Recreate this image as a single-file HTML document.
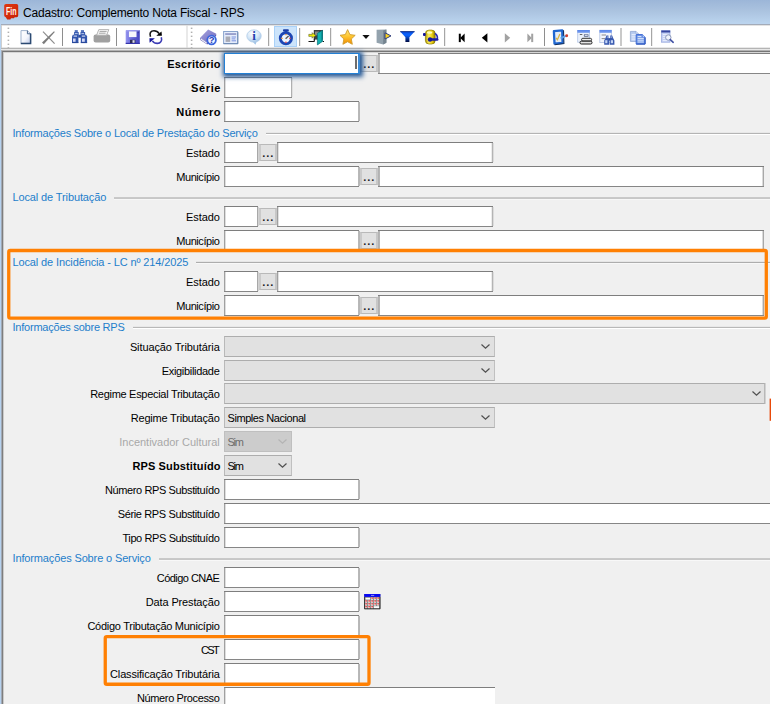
<!DOCTYPE html>
<html lang="pt-BR"><head><meta charset="utf-8"><title>Cadastro: Complemento Nota Fiscal - RPS</title>
<style>
html,body{margin:0;padding:0}
body{width:771px;height:704px;overflow:hidden;position:relative;background:#f0f0f0;font:11px "Liberation Sans", sans-serif;color:#000}
#win{position:absolute;left:0;top:0;width:771px;height:704px;overflow:hidden;background:#f0f0f0}
#title{position:absolute;left:0;top:0;width:771px;height:24px;background:linear-gradient(#9cb6d8 0,#a9c1de 40%,#bcd5ef 100%)}
#tln{position:absolute;left:1px;top:24px;width:770px;height:1px;background:#a3abb9}
#tll{position:absolute;left:1px;top:25px;width:1px;height:23px;background:#cfcfcf}
#title .t{position:absolute;left:23px;top:6px;font:12px "Liberation Sans", sans-serif;line-height:14px;color:#000;white-space:nowrap;letter-spacing:-0.19px}
#tb{position:absolute;left:1px;top:25px;width:770px;height:23px;background:#fff}
#edgeL0{position:absolute;left:0;top:24px;width:1px;height:680px;background:#b6d2ef}
#edgeL1{position:absolute;left:1px;top:50px;width:1px;height:654px;background:#a2aab6}
#edgeL2{position:absolute;left:2px;top:51px;width:1px;height:653px;background:#7e7e7e}
#edgeL3{position:absolute;left:3px;top:52px;width:1px;height:652px;background:#cbcbcb}
#edgeR{position:absolute;left:770px;top:0;width:1px;height:704px;background:#fff;z-index:4}
#ln25{position:absolute;left:2px;top:25px;width:768px;height:1px;background:#e3e3e3}
#ln47{position:absolute;left:2px;top:47px;width:768px;height:1px;background:#e8e8e8}
#ln48{position:absolute;left:1px;top:48px;width:769px;height:1px;background:#b4b4b4}
#ln49{position:absolute;left:1px;top:49px;width:769px;height:1px;background:#e8e8e8}
#ln50{position:absolute;left:1px;top:50px;width:769px;height:1px;background:#b2b2b2}
#ln51{position:absolute;left:2px;top:51px;width:768px;height:1px;background:#767676}
#ln52{position:absolute;left:3px;top:52px;width:767px;height:1px;background:#d6d6d6}
.lb{position:absolute;left:0;height:21px;line-height:21px;text-align:right;white-space:nowrap;color:#000}
.lb.b{font-weight:bold}
.lb.dis{color:#a8a8a8}
.in{position:absolute;height:21px;box-sizing:border-box;background:#fff;border-top:1px solid #7e7e7e;border-bottom:1px solid #868686}
.in>i{position:absolute;top:0;width:1px;height:19px}
.in.focus{width:136px !important;border:1px solid #2380d4;border-right:2px solid #3a8ad6;box-shadow:.5px .5px 4.5px 2px rgba(40,90,150,1);z-index:2}
.in .caret{position:absolute;left:130px;top:2px;width:2px;height:13px;background:#6e6e6e}
.bt{position:absolute;width:18px;height:17px;box-sizing:border-box;background:#e1e1e1;border:1px solid #b9b9b9;border-left:2px solid #cacaca;border-right:2px solid #c7c7c7;overflow:hidden}
.bt span{position:absolute;left:1.2px;top:0.6px;white-space:nowrap;line-height:15px;font-size:11px;font-weight:bold;letter-spacing:0.94px;color:#222}
.gh{position:absolute;left:12.5px;height:16px;line-height:16px;color:#1e7ecb;white-space:nowrap}
.gl{position:absolute;right:1px;height:1px}
.cb{position:absolute;height:21px;box-sizing:border-box;background:#e1e1e1;border:1px solid #adadad;border-left-color:#b9b9b9;border-right-color:#c0c0c0;line-height:19px;white-space:nowrap;overflow:hidden}
.cb span{position:absolute;left:2.5px;top:1px;color:#000;letter-spacing:-0.43px}
.cb .chev{position:absolute;right:2.6px;top:6.3px}
.cb.wide{box-shadow:1px 0 0 #d2d2d2;border-right-color:#b8b8b8}
.cb.wide .chev{right:2px}
.cb.dis{background:#cccccc;border-color:#bfbfbf}
.cb.dis span{color:#6d6d6d}
.hl{position:absolute;border:3px solid #ff7f0e;border-radius:2px;z-index:5}
.omark{position:absolute;left:769px;top:399px;width:2px;height:22px;background:#e8500a;z-index:5}
.ic{position:absolute}
</style></head>
<body><div id="win">
<div id="title"><svg class="ic" style="left:3px;top:3px" width="17" height="18" viewBox="3 3 17 18">
<defs><linearGradient id="glogo" x1="0" y1="0" x2="1" y2="1"><stop offset="0" stop-color="#e0380e"/><stop offset=".5" stop-color="#d42c0c"/><stop offset="1" stop-color="#c41c04"/></linearGradient></defs>
<path d="M6 4 H16.6 Q18.2 4 18.2 5.6 V15.6 Q18.2 17.2 16.6 17.2 H14.6 L14 18.2 H11 L10.4 19.4 H7.2 L5.8 17.2 Q4.2 17 4.2 15.6 V5.6 Q4.2 4 6 4 Z" fill="url(#glogo)"/>
<text x="5.9" y="15.1" font-family="Liberation Sans, sans-serif" font-size="11" font-weight="bold" fill="#fff3ee" textLength="10.6" lengthAdjust="spacingAndGlyphs">Fin</text>
</svg>
<span class="t">Cadastro: Complemento Nota Fiscal - RPS</span></div>
<div id="tb"></div><div id="tln"></div><div id="tll"></div>
<svg id="tbsvg" style="position:absolute;left:0;top:0;z-index:3" width="771" height="52" viewBox="0 0 771 52">
<defs>
<linearGradient id="gdoc" x1="0" y1="0" x2="1" y2="1"><stop offset="0" stop-color="#ffffff"/><stop offset=".55" stop-color="#f4f6fc"/><stop offset="1" stop-color="#bcc8e6"/></linearGradient>
<linearGradient id="gsave" x1="0" y1="0" x2="1" y2="0"><stop offset="0" stop-color="#9696f0"/><stop offset=".45" stop-color="#6464d6"/><stop offset="1" stop-color="#4444c0"/></linearGradient>
<linearGradient id="gstar" x1="0" y1="0" x2="0" y2="1"><stop offset="0" stop-color="#ffe680"/><stop offset=".45" stop-color="#ffc832"/><stop offset="1" stop-color="#f08a00"/></linearGradient>
<linearGradient id="gfun" x1="0" y1="0" x2="0" y2="1"><stop offset="0" stop-color="#0a50e0"/><stop offset=".35" stop-color="#0a64ff"/><stop offset="1" stop-color="#000a40"/></linearGradient>
<linearGradient id="gbook" x1="0" y1="0" x2="1" y2="1"><stop offset="0" stop-color="#a8a4e0"/><stop offset="1" stop-color="#6c68bc"/></linearGradient>
<radialGradient id="gbub" cx=".4" cy=".3" r=".8"><stop offset="0" stop-color="#ffffff"/><stop offset=".55" stop-color="#d2e5f6"/><stop offset="1" stop-color="#8fb8e2"/></radialGradient>
<linearGradient id="gdb" x1="0" y1="0" x2="1" y2="0"><stop offset="0" stop-color="#b09a00"/><stop offset=".35" stop-color="#fff060"/><stop offset=".7" stop-color="#e8cc10"/><stop offset="1" stop-color="#8a7800"/></linearGradient>
<linearGradient id="gwin" x1="0" y1="0" x2="0" y2="1"><stop offset="0" stop-color="#4a7ae8"/><stop offset="1" stop-color="#86a8f0"/></linearGradient>
</defs>
<!-- grips -->
<g fill="#b0b0b0"><rect x="7.6" y="27.6" width="1.6" height="1.4"/><rect x="7.6" y="31.6" width="1.6" height="1.4"/><rect x="7.6" y="35.6" width="1.6" height="1.4"/><rect x="7.6" y="39.6" width="1.6" height="1.4"/><rect x="7.6" y="43.6" width="1.6" height="1.4"/><rect x="7.6" y="47.2" width="1.6" height="1"/>
<rect x="190.8" y="27.6" width="1.6" height="1.4"/><rect x="190.8" y="31.6" width="1.6" height="1.4"/><rect x="190.8" y="35.6" width="1.6" height="1.4"/><rect x="190.8" y="39.6" width="1.6" height="1.4"/><rect x="190.8" y="43.6" width="1.6" height="1.4"/><rect x="190.8" y="47.2" width="1.6" height="1"/></g>
<rect x="186.5" y="25.5" width="1" height="22.5" fill="#d4d4d4"/>
<!-- separators -->
<g fill="#8e8e8e"><rect x="62" y="28" width="1" height="18"/><rect x="116" y="28" width="1" height="18"/><rect x="544" y="28" width="1" height="18"/></g>
<g fill="#a6a6a6"><rect x="268" y="28" width="1.2" height="18"/><rect x="299" y="28" width="1.2" height="18"/><rect x="330" y="28" width="1.2" height="18"/><rect x="444" y="28" width="1.2" height="18"/><rect x="620.4" y="28" width="1.2" height="18"/><rect x="651" y="28" width="1.2" height="18"/></g>
<!-- new doc -->
<path d="M21 30.6 H27.6 L30.6 33.6 V43.4 H21 Z" fill="url(#gdoc)" stroke="#9fb2cc" stroke-width="1"/>
<path d="M27.4 30.6 V33.8 H30.6" fill="#dfe6f4" stroke="#4a688e" stroke-width="1"/>
<path d="M30.6 33.4 V43.5 H20.8" fill="none" stroke="#2c4a72" stroke-width="1.5"/>
<!-- delete X -->
<path d="M43 31.6 L54.6 43.6" stroke="#8c8c8c" stroke-width="1.2" fill="none"/>
<path d="M42 42.4 L43.8 44.2 L54.8 32 L54 31.2 Z" fill="#7c7c7c"/>
<!-- binoculars -->
<g>
<rect x="74.7" y="30.1" width="3.1" height="2.2" fill="#5474be"/><rect x="80.9" y="30.1" width="3.1" height="2.2" fill="#5474be"/>
<rect x="74.1" y="32" width="4.6" height="3" fill="#3a5cb0"/><rect x="80.5" y="32" width="4.6" height="3" fill="#3a5cb0"/>
<path d="M72.9 34.8 H78.4 V43 H72 V36.6 Z" fill="#3255ac"/><path d="M80.8 34.8 H86.2 L87.1 36.6 V43 H80.8 Z" fill="#3255ac"/>
<rect x="78.2" y="34.8" width="2.8" height="2.9" fill="#2c4ca2"/>
<rect x="75" y="33.2" width="2.7" height=".9" fill="#c6d4f2"/><rect x="81.4" y="33.2" width="2.7" height=".9" fill="#c6d4f2"/>
<rect x="73.6" y="35.6" width="3.4" height="1" fill="#e6ecfc"/><rect x="81.8" y="35.6" width="3.4" height="1" fill="#e6ecfc"/>
<rect x="73" y="38.5" width="2.6" height="3.3" fill="#d4d8f6"/><rect x="82" y="38.5" width="2.8" height="3.3" fill="#d4d8f6"/>
<rect x="72" y="42.2" width="6.4" height=".9" fill="#284696"/><rect x="80.8" y="42.2" width="6.3" height=".9" fill="#284696"/>
</g>
<!-- printer (disabled) -->
<g>
<path d="M95.6 34.4 h12.6 q2 0 2 2 v4.2 q0 2 -2 2 h-12.6 q-2 0 -2 -2 v-4.2 q0 -2 2 -2z" fill="#a0a0a0"/>
<path d="M98.8 29.6 H108.8 L106.6 35.2 H96.6 Z" fill="#fafafa" stroke="#acacac" stroke-width=".9"/>
<path d="M99.6 31.4 H106.6 M98.9 33.2 H105.6" stroke="#9a9a9a" stroke-width=".9"/>
</g>
<!-- save -->
<g>
<rect x="125.7" y="30.1" width="14.1" height="13.9" rx=".8" fill="url(#gsave)"/>
<rect x="126.2" y="30.1" width="13" height="1.3" fill="#a8a8f2" opacity=".85"/>
<rect x="125.7" y="42.8" width="14.1" height="1.2" fill="#3434aa"/>
<rect x="128.9" y="31.4" width="7.6" height="5.7" fill="#f6f6fc"/>
<rect x="137.6" y="31.6" width="1.4" height="1.6" fill="#3a3aa0"/>
<rect x="130" y="39.8" width="5.4" height="3.2" fill="#2c2c54"/>
<rect x="132.5" y="40.2" width="2.1" height="2.6" fill="#dcdcea"/>
</g>
<!-- refresh -->
<g fill="none" stroke-width="1.6">
<path d="M150.5 36.7 C149.2 33.4 150.6 30.7 154 30.7 C156.4 30.7 158 31.8 159.2 33.6" stroke="#141414"/>
<path d="M161.3 37.2 C162.3 40.6 160.6 43.4 157.4 43.4 C155 43.4 153.4 42.4 152.4 40.8" stroke="#3a3ab4"/>
</g>
<path d="M161.5 31.5 L161.9 35.8 L156.3 35.8 Z" fill="#000"/>
<path d="M149.4 38.3 L154.9 38.3 L149.6 42.8 Z" fill="#14149a"/>
<!-- help book -->
<g>
<path d="M208.2 29.4 L216.2 33.8 L207.4 42.4 L200.2 37.8 Z" fill="url(#gbook)"/>
<path d="M216.2 33.8 V35.8 L207.2 44.4 L200.4 40 L200.2 37.8 L207.4 42.4 Z" fill="#5d59ae"/>
<path d="M200.8 39 L206.8 43.2" stroke="#f0f0fa" stroke-width="1.1"/>
<circle cx="211.6" cy="40" r="4.3" fill="#eef3ff" stroke="#3c66de" stroke-width="1.8"/>
<text x="211.7" y="43.2" font-family="Liberation Sans, sans-serif" font-size="9.5" font-weight="bold" fill="#2c3cb2" text-anchor="middle">?</text>
</g>
<!-- form icon -->
<g>
<rect x="223.6" y="31.5" width="14" height="12" fill="#e4ecfb" stroke="#8aa4cd" stroke-width="1"/>
<path d="M223.6 43.8 H237.9 V32.2" fill="none" stroke="#6482ac" stroke-width=".9"/>
<rect x="225.2" y="33.1" width="11" height="1.9" fill="#98a0cc"/>
<rect x="225.6" y="36.5" width="4.6" height="5.4" fill="#a9abb5"/>
<path d="M231.6 37 H236 M231.6 38.9 H235.4 M231.6 40.8 H236" stroke="#7a92de" stroke-width="1"/>
</g>
<!-- info bubble -->
<g>
<path d="M251.8 40.4 L257 40.6 L255.4 44.8 Z" fill="#9cc0e6"/>
<ellipse cx="254" cy="36" rx="7.2" ry="6.2" fill="url(#gbub)" stroke="#b4cee8" stroke-width=".8"/>
<text x="254.1" y="40.2" font-family="Liberation Serif, serif" font-size="13" font-weight="bold" fill="#2442ae" text-anchor="middle">i</text>
</g>
<!-- clock (pressed) -->
<rect x="274.5" y="26.5" width="22" height="20" fill="#cce4fb" stroke="#a9d1f8" stroke-width="1"/>
<g>
<rect x="283" y="29.3" width="5.8" height="2.2" rx=".8" fill="#1b3ea6"/>
<rect x="284.6" y="30.6" width="2.6" height="2" fill="#1b3ea6"/>
<circle cx="285.9" cy="38.3" r="5.6" fill="#eef6ff" stroke="#1c46b4" stroke-width="2.9"/>
<rect x="285.3" y="33.9" width="1.3" height="1.4" fill="#f09a3a"/>
<rect x="289.2" y="37.7" width="1.5" height="1.3" fill="#ea4a4a"/>
<rect x="285.2" y="41.6" width="1.4" height="1.4" fill="#ea4a4a"/>
<rect x="281.2" y="37.7" width="1.5" height="1.3" fill="#f09a3a"/>
<path d="M285.6 38.8 L288.6 36" stroke="#5c5c5c" stroke-width="1.4"/>
</g>
<!-- exit door -->
<g>
<path d="M313.8 30 H323 V39.6 H313.8 Z" fill="#3e3e3e"/>
<path d="M315 31.4 H319 V34.2 L315 36 Z" fill="#8c8c8c"/>
<path d="M314.3 38.8 V41.6" stroke="#111" stroke-width="1.1"/>
<path d="M308.5 41.5 H314.4 M322.6 41.5 H324" stroke="#111" stroke-width="1.1"/>
<path d="M317.4 33.2 L322.4 30.4 V41.4 L317.4 44.9 Z" fill="#12b0b0" stroke="#0a7078" stroke-width=".7" stroke-linejoin="round"/>
<path d="M321.2 31.4 L322.4 30.6 V41.2 L321.2 42 Z" fill="#0c8c92"/>
<path d="M308.8 34.3 L312.3 34.5 L311.9 32.7 L316 35.4 L311.9 38.1 L312.3 36.3 L308.8 36.4 Z" fill="#f2f200" stroke="#55552a" stroke-width=".55" stroke-linejoin="round"/>
</g>
<!-- star -->
<path d="M347.6 29.6 L349.9 34.6 L355.2 35.3 L351.3 39 L352.3 44.3 L347.6 41.7 L342.9 44.3 L343.9 39 L340 35.3 L345.3 34.6 Z" fill="url(#gstar)" stroke="#cf9c2c" stroke-width=".9" stroke-linejoin="round"/>
<path d="M362.4 35 H369.6 L366 39.1 Z" fill="#111"/>
<!-- door w/ arrow -->
<g>
<path d="M376.6 29.7 L386.4 29.4 V42.8 L383.2 44.4 L376.6 42.8 Z" fill="#93a2ad"/>
<path d="M383.2 30.6 L386.4 29.4 V42.8 L383.2 44.4 Z" fill="#75848f"/>
<path d="M385 32.8 L391 35.9 L385 39 Z" fill="#f9d21e" stroke="#2c3c84" stroke-width="1" stroke-linejoin="round"/>
</g>
<!-- funnel -->
<path d="M400.2 31.4 H414.6 L409.4 37.2 V42 H405.4 V37.2 Z" fill="url(#gfun)"/>
<rect x="400.2" y="31.2" width="14.4" height="1" fill="#0a2c86"/>
<!-- yellow db with blue arrow -->
<g>
<rect x="425.4" y="30.1" width="9.8" height="13.9" rx="3.6" fill="url(#gdb)" stroke="#8a7800" stroke-width=".7"/>
<ellipse cx="429.6" cy="32.6" rx="2.8" ry="1.2" fill="#fffbc0"/>
<rect x="423" y="33" width="2.7" height="2.9" rx="1" fill="#14149c"/>
<path d="M435 33.4 Q438.4 36 437 39.6" fill="none" stroke="#2c2cb4" stroke-width="1.6"/>
<path d="M430 39.5 H437.2" stroke="#1a1aa6" stroke-width="2.6" stroke-linecap="round"/>
<circle cx="430" cy="39.5" r="2.2" fill="#14149c"/>
</g>
<!-- nav -->
<rect x="458.8" y="33.7" width="2" height="8.4" fill="#000"/>
<path d="M460.2 37.9 L464.6 33.5 V42.3 Z" fill="#000"/>
<path d="M481.8 37.8 L487.4 33.2 V42.4 Z" fill="#000"/>
<path d="M510.2 37.8 L504.8 33.2 V42.4 Z" fill="#a2a2a2"/>
<path d="M531.8 37.9 L527.4 33.5 V42.3 Z" fill="#a2a2a2"/>
<rect x="531.2" y="33.7" width="2" height="8.4" fill="#a2a2a2"/>
<!-- icon A: doc check pen -->
<g>
<path d="M553.9 31.2 L562.2 30.4 L562.6 42.8 L554.5 43.6 Z" fill="#e4ecf6" stroke="#1f66d0" stroke-width="2.3" stroke-linejoin="round"/>
<path d="M563.5 30.2 L563.9 43.6 L554.6 44.7" fill="none" stroke="#12305e" stroke-width="1.1"/>
<path d="M556 37.8 L557.4 39.7 L559.9 34" fill="none" stroke="#d9b548" stroke-width="1.3"/>
<path d="M560.6 38.4 L565.8 35.8" stroke="#58a0e8" stroke-width="1.9"/>
<circle cx="566.7" cy="35.7" r="1.45" fill="#d2402c"/>
</g>
<!-- icon B: window + printer -->
<g>
<rect x="577.7" y="30.4" width="11.8" height="11.8" fill="#eaf0fa" stroke="#b4c6e6" stroke-width=".8"/>
<rect x="577.3" y="30.1" width="12.5" height="2.8" fill="url(#gwin)"/>
<rect x="579.8" y="34.1" width="2.5" height=".9" fill="#555"/>
<rect x="583.8" y="34.1" width="4.8" height="2.8" rx="1" fill="#7a86a4"/>
<rect x="585" y="34.8" width="2.6" height="1" fill="#e8ecf4"/>
<rect x="581.6" y="38.3" width="10" height="2.7" rx="1.2" fill="#eeeeee" stroke="#1c1c1c" stroke-width=".9"/>
<rect x="580" y="41.2" width="12" height="2.8" rx="1.3" fill="#e4e4e4" stroke="#1c1c1c" stroke-width="1"/>
</g>
<!-- icon C: window + binoculars -->
<g>
<rect x="599.8" y="30.2" width="11.6" height="12.4" fill="#f2f5fc" stroke="#b4c4e4" stroke-width=".8"/>
<rect x="599.5" y="30.1" width="12.2" height="2.8" fill="url(#gwin)"/>
<path d="M601.6 35 H606 M601.6 38.6 H605" stroke="#808080" stroke-width=".9"/>
<path d="M606.4 35.6 h2 v2 l.6 1 v6.2 h-4.8 v-4.4 l1.4 -2.6z M610.2 35.6 h2 l.8 2.2 l1.4 2.6 v4.4 h-4.8 v-6.2 l.6 -1z" fill="#3a5ab0"/>
<rect x="608.8" y="38.2" width="1.4" height="2.4" fill="#2c4ca2"/>
<rect x="605.2" y="40.2" width="2.2" height="3" fill="#c4d4f4"/><rect x="610.8" y="40.2" width="2.2" height="3" fill="#c4d4f4"/><rect x="606.8" y="36.6" width="1.4" height=".9" fill="#c4d4f4"/><rect x="610.6" y="36.6" width="1.4" height=".9" fill="#c4d4f4"/>
</g>
<!-- copy -->
<g>
<path d="M630.4 31.4 H636 L638.4 33.8 V41.4 H630.4 Z" fill="#b4c9ef" stroke="#8fa6d2" stroke-width=".8"/>
<path d="M636 31.4 V33.8 H638.4" fill="#e6eefc" stroke="#8fa6d2" stroke-width=".6"/>
<path d="M631.6 34.4 H637 M631.6 36.2 H637 M631.6 38 H637 M631.6 39.8 H637" stroke="#eef4ff" stroke-width=".9"/>
<path d="M636.2 34.6 H642.4 L645 37.2 V44 H636.2 Z" fill="#6f96e6" stroke="#3f6cd6" stroke-width="1"/>
<path d="M642.4 34.6 V37.2 H645" fill="#cfe0fb" stroke="#3f6cd6" stroke-width=".6"/>
<path d="M637.6 36.6 H641.4 M637.6 38.4 H643.8 M637.6 40.2 H643.8 M637.6 42 H643.8" stroke="#e8f0ff" stroke-width=".9"/>
<path d="M645.1 37.4 V44.1 H636.2" fill="none" stroke="#2f58bc" stroke-width="1"/>
</g>
<!-- search doc -->
<g>
<rect x="661.5" y="30.7" width="8.5" height="11.5" fill="#c3d0f4" stroke="#93a4dc" stroke-width=".7"/>
<rect x="661.3" y="30.5" width="8.9" height="2" fill="#3646a0"/>
<path d="M662.8 34.6 H668.8 M662.8 36.6 H665.6 M662.8 38.6 H665.6 M662.8 40.6 H667.4" stroke="#edf2fe" stroke-width=".9"/>
<circle cx="668.3" cy="37.5" r="2.7" fill="#f0f5fe" stroke="#8c98b8" stroke-width="1"/>
<path d="M670.3 39.6 L673.2 42.3" stroke="#4252a4" stroke-width="1.6" stroke-linecap="round"/>
</g>
</svg>

<div id="edgeL0"></div><div id="edgeL1"></div>
<div id="ln25"></div><div id="ln47"></div><div id="ln48"></div><div id="ln49"></div><div id="ln50"></div><div id="ln51"></div><div id="ln52"></div>
<div id="edgeL2"></div><div id="edgeL3"></div><div id="edgeR"></div>
<div class="lb b" style="top:54px;width:220.72px;letter-spacing:0.216px">Escritório</div>
<div class="in focus" style="left:224px;top:53px;width:135px"><i class="caret"></i></div>
<div class="bt" style="left:360px;top:55px"><span>...</span></div>
<div class="in" style="left:378px;top:53px;width:400px"><i style="left:0px;background:#b2b2b2"></i><i style="left:1px;background:#b6b6b6"></i></div>
<div class="lb b" style="top:78px;width:221.12px;letter-spacing:0.62px">Série</div>
<div class="in" style="left:224px;top:77px;width:68px"><i style="left:0px;background:#a0a0a0"></i><i style="left:1px;background:#dedede"></i><i style="left:67px;background:#b0b0b0"></i><i style="left:68px;background:#e0e0e0"></i></div>
<div class="lb b" style="top:102px;width:221.05px;letter-spacing:0.548px">Número</div>
<div class="in" style="left:224px;top:101px;width:135px"><i style="left:0px;background:#a0a0a0"></i><i style="left:1px;background:#dedede"></i><i style="left:134px;background:#b8b8b8"></i><i style="left:135px;background:#b6b6b6"></i></div>
<div class="gh" style="top:125px;letter-spacing:-0.189px"><span>Informações Sobre o Local de Prestação do Serviço</span></div><div class="gl" style="top:132px;left:266px;background:#e8e8e8"></div><div class="gl" style="top:133px;left:266px;background:#b4b4b4"></div><div class="gl" style="top:134px;left:266px;background:#ffffff"></div>
<div class="lb" style="top:143px;width:219.69px;letter-spacing:-0.11px">Estado</div>
<div class="in" style="left:224px;top:142px;width:34px"><i style="left:0px;background:#a0a0a0"></i><i style="left:1px;background:#dedede"></i><i style="left:33px;background:#a8a8a8"></i><i style="left:34px;background:#d2d2d2"></i></div>
<div class="bt" style="left:259px;top:144px"><span>...</span></div>
<div class="in" style="left:277px;top:142px;width:216px"><i style="left:0px;background:#a0a0a0"></i><i style="left:1px;background:#e2e2e2"></i><i style="left:214px;background:#ececec"></i><i style="left:215px;background:#b4b4b4"></i><i style="left:216px;background:#dcdcdc"></i></div>
<div class="lb" style="top:167px;width:219.35px;letter-spacing:-0.447px">Município</div>
<div class="in" style="left:224px;top:166px;width:135px"><i style="left:0px;background:#a0a0a0"></i><i style="left:1px;background:#dedede"></i><i style="left:134px;background:#b8b8b8"></i><i style="left:135px;background:#b6b6b6"></i></div>
<div class="bt" style="left:360px;top:168px"><span>...</span></div>
<div class="in" style="left:378px;top:166px;width:386px"><i style="left:0px;background:#b2b2b2"></i><i style="left:1px;background:#b6b6b6"></i><i style="left:384px;background:#dadada"></i><i style="left:385px;background:#a8a8a8"></i></div>
<div class="gh" style="top:189px;letter-spacing:-0.123px"><span>Local de Tributação</span></div><div class="gl" style="top:197px;left:114px;background:#c9c9c9"></div><div class="gl" style="top:198px;left:114px;background:#c7c7c7"></div><div class="gl" style="top:199px;left:114px;background:#f7f7f7"></div>
<div class="lb" style="top:207px;width:219.69px;letter-spacing:-0.11px">Estado</div>
<div class="in" style="left:224px;top:206px;width:34px"><i style="left:0px;background:#a0a0a0"></i><i style="left:1px;background:#dedede"></i><i style="left:33px;background:#a8a8a8"></i><i style="left:34px;background:#d2d2d2"></i></div>
<div class="bt" style="left:259px;top:208px"><span>...</span></div>
<div class="in" style="left:277px;top:206px;width:216px"><i style="left:0px;background:#a0a0a0"></i><i style="left:1px;background:#e2e2e2"></i><i style="left:214px;background:#ececec"></i><i style="left:215px;background:#b4b4b4"></i><i style="left:216px;background:#dcdcdc"></i></div>
<div class="lb" style="top:231px;width:219.35px;letter-spacing:-0.447px">Município</div>
<div class="in" style="left:224px;top:230px;width:135px"><i style="left:0px;background:#a0a0a0"></i><i style="left:1px;background:#dedede"></i><i style="left:134px;background:#b8b8b8"></i><i style="left:135px;background:#b6b6b6"></i></div>
<div class="bt" style="left:360px;top:232px"><span>...</span></div>
<div class="in" style="left:378px;top:230px;width:386px"><i style="left:0px;background:#b2b2b2"></i><i style="left:1px;background:#b6b6b6"></i><i style="left:384px;background:#dadada"></i><i style="left:385px;background:#a8a8a8"></i></div>
<div class="gh" style="top:254px;letter-spacing:-0.122px"><span>Local de Incidência - LC nº 214/2025</span></div><div class="gl" style="top:261px;left:196px;background:#e6e6e6"></div><div class="gl" style="top:262px;left:196px;background:#adadad"></div><div class="gl" style="top:263px;left:196px;background:#f8f8f8"></div>
<div class="lb" style="top:272px;width:219.69px;letter-spacing:-0.11px">Estado</div>
<div class="in" style="left:224px;top:271px;width:34px"><i style="left:0px;background:#a0a0a0"></i><i style="left:1px;background:#dedede"></i><i style="left:33px;background:#a8a8a8"></i><i style="left:34px;background:#d2d2d2"></i></div>
<div class="bt" style="left:259px;top:273px"><span>...</span></div>
<div class="in" style="left:277px;top:271px;width:216px"><i style="left:0px;background:#a0a0a0"></i><i style="left:1px;background:#e2e2e2"></i><i style="left:214px;background:#ececec"></i><i style="left:215px;background:#b4b4b4"></i><i style="left:216px;background:#dcdcdc"></i></div>
<div class="lb" style="top:296px;width:219.35px;letter-spacing:-0.447px">Município</div>
<div class="in" style="left:224px;top:295px;width:135px"><i style="left:0px;background:#a0a0a0"></i><i style="left:1px;background:#dedede"></i><i style="left:134px;background:#b8b8b8"></i><i style="left:135px;background:#b6b6b6"></i></div>
<div class="bt" style="left:360px;top:297px"><span>...</span></div>
<div class="in" style="left:378px;top:295px;width:386px"><i style="left:0px;background:#b2b2b2"></i><i style="left:1px;background:#b6b6b6"></i><i style="left:384px;background:#dadada"></i><i style="left:385px;background:#a8a8a8"></i></div>
<div class="gh" style="top:319px;letter-spacing:-0.224px"><span>Informações sobre RPS</span></div><div class="gl" style="top:326px;left:133px;background:#e8e8e8"></div><div class="gl" style="top:327px;left:133px;background:#b8b8b8"></div><div class="gl" style="top:328px;left:133px;background:#ffffff"></div>
<div class="lb" style="top:337px;width:219.70px;letter-spacing:-0.101px">Situação Tributária</div>
<div class="cb" style="left:224px;top:336px;width:271px"><span></span><svg class="chev" width="11" height="7" viewBox="0 0 11 7"><path d="M1.5 1.5 L5.5 5.2 L9.5 1.5" fill="none" stroke="#505050" stroke-width="1.25"/></svg></div>
<div class="lb" style="top:361px;width:219.49px;letter-spacing:-0.306px">Exigibilidade</div>
<div class="cb" style="left:224px;top:360px;width:271px"><span></span><svg class="chev" width="11" height="7" viewBox="0 0 11 7"><path d="M1.5 1.5 L5.5 5.2 L9.5 1.5" fill="none" stroke="#505050" stroke-width="1.25"/></svg></div>
<div class="lb" style="top:384px;width:219.51px;letter-spacing:-0.295px">Regime Especial Tributação</div>
<div class="cb wide" style="left:224px;top:383px;width:541px"><span></span><svg class="chev" width="11" height="7" viewBox="0 0 11 7"><path d="M1.5 1.5 L5.5 5.2 L9.5 1.5" fill="none" stroke="#505050" stroke-width="1.25"/></svg></div>
<div class="lb" style="top:408px;width:219.59px;letter-spacing:-0.208px">Regime Tributação</div>
<div class="cb" style="left:224px;top:407px;width:271px"><span>Simples Nacional</span><svg class="chev" width="11" height="7" viewBox="0 0 11 7"><path d="M1.5 1.5 L5.5 5.2 L9.5 1.5" fill="none" stroke="#505050" stroke-width="1.25"/></svg></div>
<div class="lb dis" style="top:432px;width:219.78px;letter-spacing:-0.02px">Incentivador Cultural</div>
<div class="cb dis" style="left:224px;top:431px;width:68px"><span><b style="font-weight:normal;letter-spacing:-1.3px">Sim</b></span><svg class="chev" width="11" height="7" viewBox="0 0 11 7"><path d="M1.5 1.5 L5.5 5.2 L9.5 1.5" fill="none" stroke="#b4b4b4" stroke-width="1.25"/></svg></div>
<div class="lb b" style="top:456px;width:220.64px;letter-spacing:0.138px">RPS Substituído</div>
<div class="cb" style="left:224px;top:455px;width:68px"><span><b style="font-weight:normal;letter-spacing:-1.3px">Sim</b></span><svg class="chev" width="11" height="7" viewBox="0 0 11 7"><path d="M1.5 1.5 L5.5 5.2 L9.5 1.5" fill="none" stroke="#505050" stroke-width="1.25"/></svg></div>
<div class="lb" style="top:480px;width:219.42px;letter-spacing:-0.385px">Número RPS Substituído</div>
<div class="in" style="left:224px;top:479px;width:135px"><i style="left:0px;background:#a0a0a0"></i><i style="left:1px;background:#dedede"></i><i style="left:134px;background:#b8b8b8"></i><i style="left:135px;background:#b6b6b6"></i></div>
<div class="lb" style="top:504px;width:219.43px;letter-spacing:-0.373px">Série RPS Substituído</div>
<div class="in" style="left:224px;top:503px;width:560px"><i style="left:0px;background:#a0a0a0"></i><i style="left:1px;background:#dedede"></i></div>
<div class="lb" style="top:528px;width:219.41px;letter-spacing:-0.388px">Tipo RPS Substituído</div>
<div class="in" style="left:224px;top:527px;width:135px"><i style="left:0px;background:#a0a0a0"></i><i style="left:1px;background:#dedede"></i><i style="left:134px;background:#b8b8b8"></i><i style="left:135px;background:#b6b6b6"></i></div>
<div class="gh" style="top:550px;letter-spacing:-0.137px"><span>Informações Sobre o Serviço</span></div><div class="gl" style="top:558px;left:159px;background:#c9c9c9"></div><div class="gl" style="top:559px;left:159px;background:#c7c7c7"></div><div class="gl" style="top:560px;left:159px;background:#f8f8f8"></div>
<div class="lb" style="top:568px;width:219.25px;letter-spacing:-0.548px">Código CNAE</div>
<div class="in" style="left:224px;top:567px;width:135px"><i style="left:0px;background:#a0a0a0"></i><i style="left:1px;background:#dedede"></i><i style="left:134px;background:#b8b8b8"></i><i style="left:135px;background:#b6b6b6"></i></div>
<div class="lb" style="top:592px;width:219.66px;letter-spacing:-0.141px">Data Prestação</div>
<div class="in" style="left:224px;top:591px;width:135px"><i style="left:0px;background:#a0a0a0"></i><i style="left:1px;background:#dedede"></i><i style="left:134px;background:#b8b8b8"></i><i style="left:135px;background:#b6b6b6"></i></div>
<svg class="ic" style="left:364px;top:594px" width="17" height="16" viewBox="0 0 17 16">
<rect x=".2" y="0" width="16.2" height="15.2" fill="#7c7c7c"/>
<rect x=".2" y="0" width="16.2" height="2.9" fill="#0808f2"/>
<rect x="7" y=".9" width="3.2" height="1" fill="#8c8cf4"/>
<g fill="#ffffff">
<rect x="1.4" y="3.7" width="4.8" height="1.9"/>
<rect x="7" y="3.5" width="2.2" height="2.2"/><rect x="10" y="3.5" width="2.2" height="2.2"/><rect x="13" y="3.5" width="2.2" height="2.2"/>
<rect x="1" y="6.4" width="2.2" height="2.2"/><rect x="4" y="6.4" width="2.2" height="2.2"/><rect x="7" y="6.4" width="2.2" height="2.2"/><rect x="10" y="6.4" width="2.2" height="2.2"/><rect x="13" y="6.4" width="2.2" height="2.2"/>
<rect x="1" y="9.3" width="2.2" height="2.2"/><rect x="4" y="9.3" width="2.2" height="2.2"/><rect x="7" y="9.3" width="2.2" height="2.2"/><rect x="10" y="9.3" width="2.2" height="2.2"/><rect x="13" y="9.3" width="2.2" height="2.2"/>
<rect x="1" y="12.2" width="2.2" height="2.2"/><rect x="4" y="12.2" width="2.2" height="2.2"/><rect x="7" y="12.2" width="2.2" height="2.2"/><rect x="10" y="12.2" width="5.2" height="2.2"/>
</g>
<g fill="#e22a2a">
<rect x="7.3" y="3.5" width="1.7" height="1.2"/><rect x="10.3" y="3.5" width="1.7" height="1.2"/><rect x="13.3" y="3.5" width="1.7" height="1.2"/>
<rect x="1.3" y="6.4" width="1.7" height="1.2"/><rect x="4.3" y="6.4" width="1.7" height="1.2"/><rect x="7.3" y="6.4" width="1.7" height="1.2"/><rect x="10.3" y="6.4" width="1.7" height="1.2"/><rect x="13.3" y="6.4" width="1.7" height="1.2"/>
<rect x="1.3" y="9.3" width="1.7" height="1.2"/><rect x="4.3" y="9.3" width="1.7" height="1.2"/><rect x="7.3" y="9.3" width="1.7" height="1.2"/><rect x="10.3" y="9.3" width="1.7" height="1.2"/><rect x="13.3" y="9.3" width="1.7" height="1.2"/>
<rect x="1.3" y="12.2" width="1.7" height="1.2"/><rect x="4.3" y="12.2" width="1.7" height="1.2"/><rect x="7.3" y="12.2" width="1.7" height="1.2"/>
</g>
<path d="M.6 3 V14.8 H16 V3" fill="none" stroke="#1c1c1c" stroke-width=".8"/>
</svg>

<div class="lb" style="top:616px;width:219.53px;letter-spacing:-0.27px">Código Tributação Município</div>
<div class="in" style="left:224px;top:615px;width:135px"><i style="left:0px;background:#a0a0a0"></i><i style="left:1px;background:#dedede"></i><i style="left:134px;background:#b8b8b8"></i><i style="left:135px;background:#b6b6b6"></i></div>
<div class="lb" style="top:640px;width:218.25px;letter-spacing:-1.55px">CST</div>
<div class="in" style="left:224px;top:639px;width:135px"><i style="left:0px;background:#a0a0a0"></i><i style="left:1px;background:#dedede"></i><i style="left:134px;background:#b8b8b8"></i><i style="left:135px;background:#b6b6b6"></i></div>
<div class="lb" style="top:664px;width:219.62px;letter-spacing:-0.175px">Classificação Tributária</div>
<div class="in" style="left:224px;top:663px;width:135px"><i style="left:0px;background:#a0a0a0"></i><i style="left:1px;background:#dedede"></i><i style="left:134px;background:#b8b8b8"></i><i style="left:135px;background:#b6b6b6"></i></div>
<div class="lb" style="top:688px;width:219.43px;letter-spacing:-0.375px">Número Processo</div>
<div class="in" style="left:224px;top:687px;width:271px"><i style="left:0px;background:#a0a0a0"></i><i style="left:1px;background:#dedede"></i></div>
<svg class="ic" style="left:0;top:0;z-index:5" width="771" height="704" viewBox="0 0 771 704"><g fill="none" stroke="#ff8003" stroke-width="3.3"><rect x="8.75" y="250.5" width="757.55" height="67.7" rx="1.6"/><rect x="105.25" y="636.55" width="263.75" height="47.7" rx="1.6"/></g><rect x="769.6" y="398.6" width="1.4" height="22.2" fill="#e84a0a"/></svg>
</div></body></html>
